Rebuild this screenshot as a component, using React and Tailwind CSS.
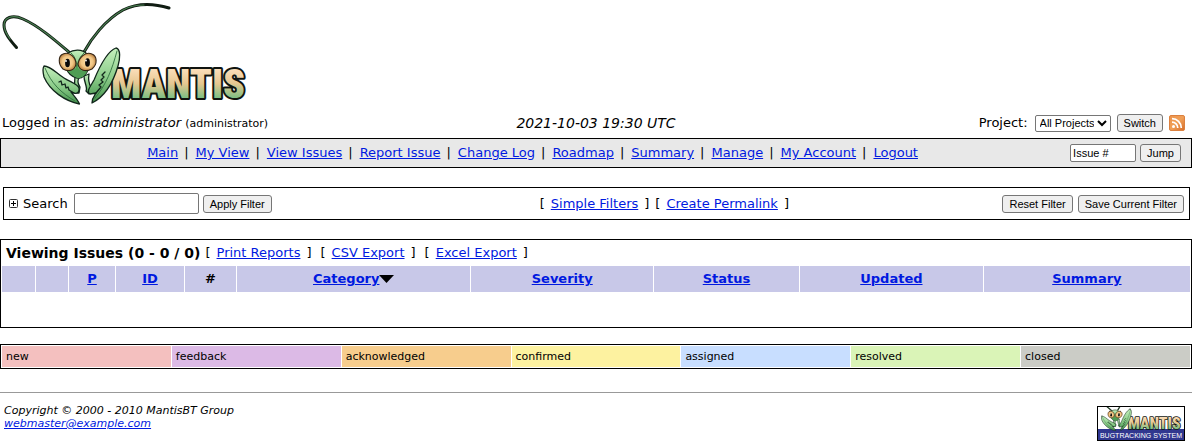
import React from "react";

const link = "text-[#0019e0] underline";
const button =
  "h-[18px] rounded-[3px] border border-[#767676] bg-[#efefef] px-[6px] font-['Liberation_Sans',Arial,sans-serif] text-[11px] leading-4 text-black whitespace-nowrap";
const field =
  "rounded-[2px] border border-[#767676] bg-white font-['Liberation_Sans',Arial,sans-serif] text-[11px] text-black";

const menu = [
  "Main", "My View", "View Issues", "Report Issue", "Change Log",
  "Roadmap", "Summary", "Manage", "My Account", "Logout",
];

const columns = [
  { id: "select", label: "", width: "w-[33px]" },
  { id: "edit", label: "", width: "w-[32px]" },
  { id: "priority", label: "P", width: "w-[46px]", sortable: true },
  { id: "id", label: "ID", width: "w-[68px]", sortable: true },
  { id: "notes", label: "#", width: "w-[51px]" },
  { id: "category", label: "Category", width: "w-[19.8%]", sortable: true, sorted: true },
  { id: "severity", label: "Severity", width: "w-[15.4%]", sortable: true },
  { id: "status", label: "Status", width: "w-[12.3%]", sortable: true },
  { id: "updated", label: "Updated", width: "w-[15.5%]", sortable: true },
  { id: "summary", label: "Summary", width: "", sortable: true },
];

const statuses = [
  { label: "new", color: "bg-[#f4c0bf]" },
  { label: "feedback", color: "bg-[#dcbae6]" },
  { label: "acknowledged", color: "bg-[#f7cd8d]" },
  { label: "confirmed", color: "bg-[#fdf2a0]" },
  { label: "assigned", color: "bg-[#c8deff]" },
  { label: "resolved", color: "bg-[#daf4b7]" },
  { label: "closed", color: "bg-[#cbccc6]" },
];

function Mantis({ id }) {
  const green = `url(#${id}-green)`;
  const eye = `url(#${id}-eye)`;
  return (
    <g strokeLinecap="round" strokeLinejoin="round">
      <defs>
        <linearGradient id={`${id}-green`} x1="0" y1="0" x2="0" y2="1">
          <stop offset="0" stopColor="#c5f0bd" />
          <stop offset="0.55" stopColor="#8acb88" />
          <stop offset="1" stopColor="#42914b" />
        </linearGradient>
        <radialGradient id={`${id}-eye`}>
          <stop offset="0" stopColor="#fbdda5" />
          <stop offset="0.65" stopColor="#f0c583" />
          <stop offset="1" stopColor="#bd8546" />
        </radialGradient>
        <linearGradient id={`${id}-word`} x1="0" y1="0" x2="0" y2="1">
          <stop offset="0.2" stopColor="#f9dcb6" />
          <stop offset="0.48" stopColor="#e6c791" />
          <stop offset="0.78" stopColor="#80c084" />
        </linearGradient>
      </defs>
      <text
        x="111" y="98" fontSize="40" fontWeight="900" fill={`url(#${id}-word)`}
        stroke="#101410" strokeWidth="4" paintOrder="stroke"
        className="font-[Impact,'Roboto_Condensed','Open_Sans_Condensed','Liberation_Sans',sans-serif]"
      >
        MANTIS
      </text>
      <g fill="none">
        <path d="M70 53C56 41 39 26 23 19C12 14 4 18 4 25C4 33 10 40 16.500 47.500" stroke="#101c12" strokeWidth="3" />
        <path d="M70 53C56 41 39 26 23 19C12 14 4 18 4 25C4 30 7 35 10 39" stroke="#4a8052" strokeWidth="1.200" />
        <path d="M84 52C91 39 105 20 123 10C137 3 153 3 169 8" stroke="#101c12" strokeWidth="3" />
        <path d="M84 52C91 39 105 20 123 10C130 6 137 5 144 5" stroke="#4a8052" strokeWidth="1.200" />
      </g>
      <g fill={green} stroke="#10251a" strokeWidth="1.300">
        <path d="M75 76L79 78C77 81 78 84 80 87L79 93L74 93Z" />
        <path d="M84 76L89 74C88 80 89 84 91 87L89 94L86 91C88 87 84 83 84 76Z" />
        <path d="M44 66C51 66 57 74 64 78C70 82 78 84 79 88C80 92 77 94 74 93L71 92C75 97 78 100 79.500 104C65 101 50 91 44 77C43 73 42 69 44 66Z" />
        <path d="M116 48C121 49 120 59 118 66C113 83 104 97 92 103C92 98 94 96 96 93L90 94C86 92 90 87 94 80C99 68 107 51 116 48Z" />
      </g>
      <g fill="none" stroke="#317140" strokeWidth="0.900">
        <path d="M45 68C51 83 61 93 75 101" />
        <path d="M117 51C112 70 106 85 95 98" />
      </g>
      <g fill="none" stroke="#10251a" strokeWidth="1.300">
        <path d="M74 93L69 90 68 87 66 88 65 84 62 85 61 81 59 82" />
        <path d="M96 93L101 87 99 85 103 82 101 80 104 77 102 75 105 72" />
      </g>
      <path d="M68 53C74 49 82 49 87 54L89 68C86 75 82 79 77 78C72 77 68 73 66 68Z" fill={green} stroke="#10251a" strokeWidth="1.300" />
      <path d="M71 53C76 57 77 63 77 77M84 53C80 57 78 60 77 67" fill="none" stroke="#398044" strokeWidth="1" />
      <path d="M66 70C72 72 76 69 77 66C79 71 84 72 88 70C85 77 79 80 75 77Z" fill="#4f9d54" />
      <path d="M63 54C70 51 76 58 76 64C75 71 68 72 63 69C58 64 58 56 63 54Z" fill={eye} stroke="#332313" strokeWidth="1.100" />
      <path d="M92 54C85 51 79 58 78 64C79 71 86 72 92 69C98 64 97 56 92 54Z" fill={eye} stroke="#332313" strokeWidth="1.100" />
      <ellipse cx="67.500" cy="63" rx="2.400" ry="4.300" fill="#080808" />
      <ellipse cx="87.500" cy="62.500" rx="2.400" ry="4.300" fill="#080808" />
      <circle cx="66" cy="61" r="0.900" fill="#fff" />
      <circle cx="86" cy="60.500" r="0.900" fill="#fff" />
    </g>
  );
}

function FooterBadge() {
  return (
    <svg width="88" height="35" viewBox="0 0 88 35" role="img" aria-label="Mantis Bugtracking System" className="block">
      <rect width="88" height="35" fill="#fff" />
      <rect x="1" y="23" width="86" height="11" fill="#30378f" />
      <svg x="1" y="1" width="86" height="24" viewBox="34 43 220 61">
        <Mantis id="badge" />
      </svg>
      <text x="44" y="32" textAnchor="middle" fontSize="7" fill="#fff" className="font-['Liberation_Sans',Arial,sans-serif]">
        BUGTRACKING SYSTEM
      </text>
      <rect x="0.500" y="0.500" width="87" height="34" fill="none" stroke="#000" />
    </svg>
  );
}

function RssIcon() {
  return (
    <svg width="16" height="16" viewBox="0 0 16 16" aria-hidden="true" className="block">
      <defs>
        <linearGradient id="rss-orange" x1="0" y1="0" x2="1" y2="1">
          <stop offset="0" stopColor="#ed944c" />
          <stop offset="0.5" stopColor="#f0a058" />
          <stop offset="1" stopColor="#d66c28" />
        </linearGradient>
      </defs>
      <rect x="0.500" y="0.500" width="15" height="15" rx="1.500" fill="url(#rss-orange)" stroke="#dc813f" />
      <circle cx="4.500" cy="11.500" r="1.500" fill="#fff" />
      <path d="M3 7.200A5.800 5.800 0 0 1 8.800 13M3 3.700A9.300 9.300 0 0 1 12.300 13" fill="none" stroke="#fff" strokeWidth="1.700" />
    </svg>
  );
}

export default function App() {
  return (
    <div className="bg-white font-['DejaVu_Sans',Verdana,sans-serif] text-[13px] leading-4 text-black">
      <header>
        <a href="#main" className="block w-fit">
          <svg width="250" height="108" viewBox="0 0 250 108" role="img" aria-label="Mantis" className="block">
            <Mantis id="logo" />
          </svg>
        </a>
        <div className="grid h-[30px] grid-cols-3 items-center">
          <div className="pl-[2px] whitespace-nowrap">
            Logged in as: <em>administrator</em> <span className="text-[11px]">(administrator)</span>
          </div>
          <div className="text-center text-[14px] italic">2021-10-03 19:30 UTC</div>
          <form className="flex items-center justify-end pr-[7px]" onSubmit={(e) => e.preventDefault()}>
            <label htmlFor="project" className="mr-[7px]">Project:</label>
            <select id="project" className={`${field} h-[17px] w-[76px]`}>
              <option>All Projects</option>
            </select>
            <button className={`${button} mx-[6px]`}>Switch</button>
            <a href="#rss" aria-label="RSS feed"><RssIcon /></a>
          </form>
        </div>
      </header>

      <nav className="flex h-[30px] items-center border border-black bg-[#e8e8e8] pr-[10px]">
        <div className="flex flex-1 justify-center whitespace-nowrap">
          {menu.map((item, i) => (
            <React.Fragment key={item}>
              {i > 0 && <span className="pr-[7px] pl-[6px]">|</span>}
              <a href={`#${item}`} className={link}>{item}</a>
            </React.Fragment>
          ))}
        </div>
        <form className="flex items-center gap-1 pl-[6px]" onSubmit={(e) => e.preventDefault()}>
          <input aria-label="Issue number" defaultValue="Issue #" className={`${field} h-[18px] w-[66px] px-[2px]`} />
          <button className={button}>Jump</button>
        </form>
      </nav>

      <form
        className="mt-[19px] mr-[2px] ml-[3px] flex h-[33px] items-center border border-black px-[5px]"
        onSubmit={(e) => e.preventDefault()}
      >
        <div className="flex w-[27%] items-center">
          <button type="button" aria-label="Expand filters">
            <svg width="9" height="9" viewBox="0 0 9 9" className="block">
              <rect x="0.500" y="0.500" width="8" height="8" rx="1" fill="#fff" stroke="#333" />
              <path d="M2 4.500h5M4.500 2v5" stroke="#000" />
            </svg>
          </button>
          <label htmlFor="search" className="ml-[5px]">Search</label>
          <input id="search" className={`${field} ml-[6px] h-[21px] w-[125px] px-[3px]`} />
          <button className={`${button} ml-1`}>Apply Filter</button>
        </div>
        <div className="flex flex-1 justify-center gap-[6px] whitespace-nowrap">
          <span>[</span><a href="#simple" className={link}>Simple Filters</a><span>]</span>
          <span>[</span><a href="#permalink" className={link}>Create Permalink</a><span>]</span>
        </div>
        <div className="flex gap-[5px]">
          <button className={button}>Reset Filter</button>
          <button className={button}>Save Current Filter</button>
        </div>
      </form>

      <section className="mt-[19px] border border-black pb-[35px]">
        <div className="flex h-[25px] items-center gap-[5px] pl-[5px] whitespace-nowrap">
          <h1 className="text-[14px] font-bold">Viewing Issues (0 - 0 / 0)</h1>
          {["Print Reports", "CSV Export", "Excel Export"].map((item) => (
            <span key={item} className="flex gap-[6px] pr-[4px]">
              <span>[</span><a href={`#${item}`} className={link}>{item}</a><span>]</span>
            </span>
          ))}
        </div>
        <table className="w-full table-fixed border-separate border-spacing-x-px border-spacing-y-0">
          <thead>
            <tr className="h-[27px] bg-[#c8c8e8]">
              {columns.map((col) => (
                <th key={col.id} scope="col" className={`${col.width} border-t border-white p-0 text-center font-bold`}>
                  <span className="inline-flex items-center">
                    {col.sortable ? <a href={`#${col.id}`} className={link}>{col.label}</a> : col.label}
                    {col.sorted && (
                      <svg width="15" height="8" viewBox="0 0 15 8" className="block" aria-hidden="true">
                        <path d="M0 0h15L7.500 8Z" />
                      </svg>
                    )}
                  </span>
                </th>
              ))}
            </tr>
          </thead>
        </table>
      </section>

      <table className="mt-4 w-full table-fixed border-separate border-spacing-px border border-black text-[11px] leading-[21px]">
        <tbody>
          <tr>
            {statuses.map((s) => (
              <td key={s.label} className={`${s.color} px-1 py-0`}>{s.label}</td>
            ))}
          </tr>
        </tbody>
      </table>

      <hr className="mt-[23px] border-t border-[#999]" />
      <footer className="flex items-start justify-between pt-[11px] pr-[7px] pl-1">
        <address className="text-[11px] leading-[13px]">
          Copyright © 2000 - 2010 MantisBT Group
          <br />
          <a href="mailto:webmaster@example.com" className={link}>webmaster@example.com</a>
        </address>
        <a href="#mantis" className="mt-[2px]"><FooterBadge /></a>
      </footer>
    </div>
  );
}
